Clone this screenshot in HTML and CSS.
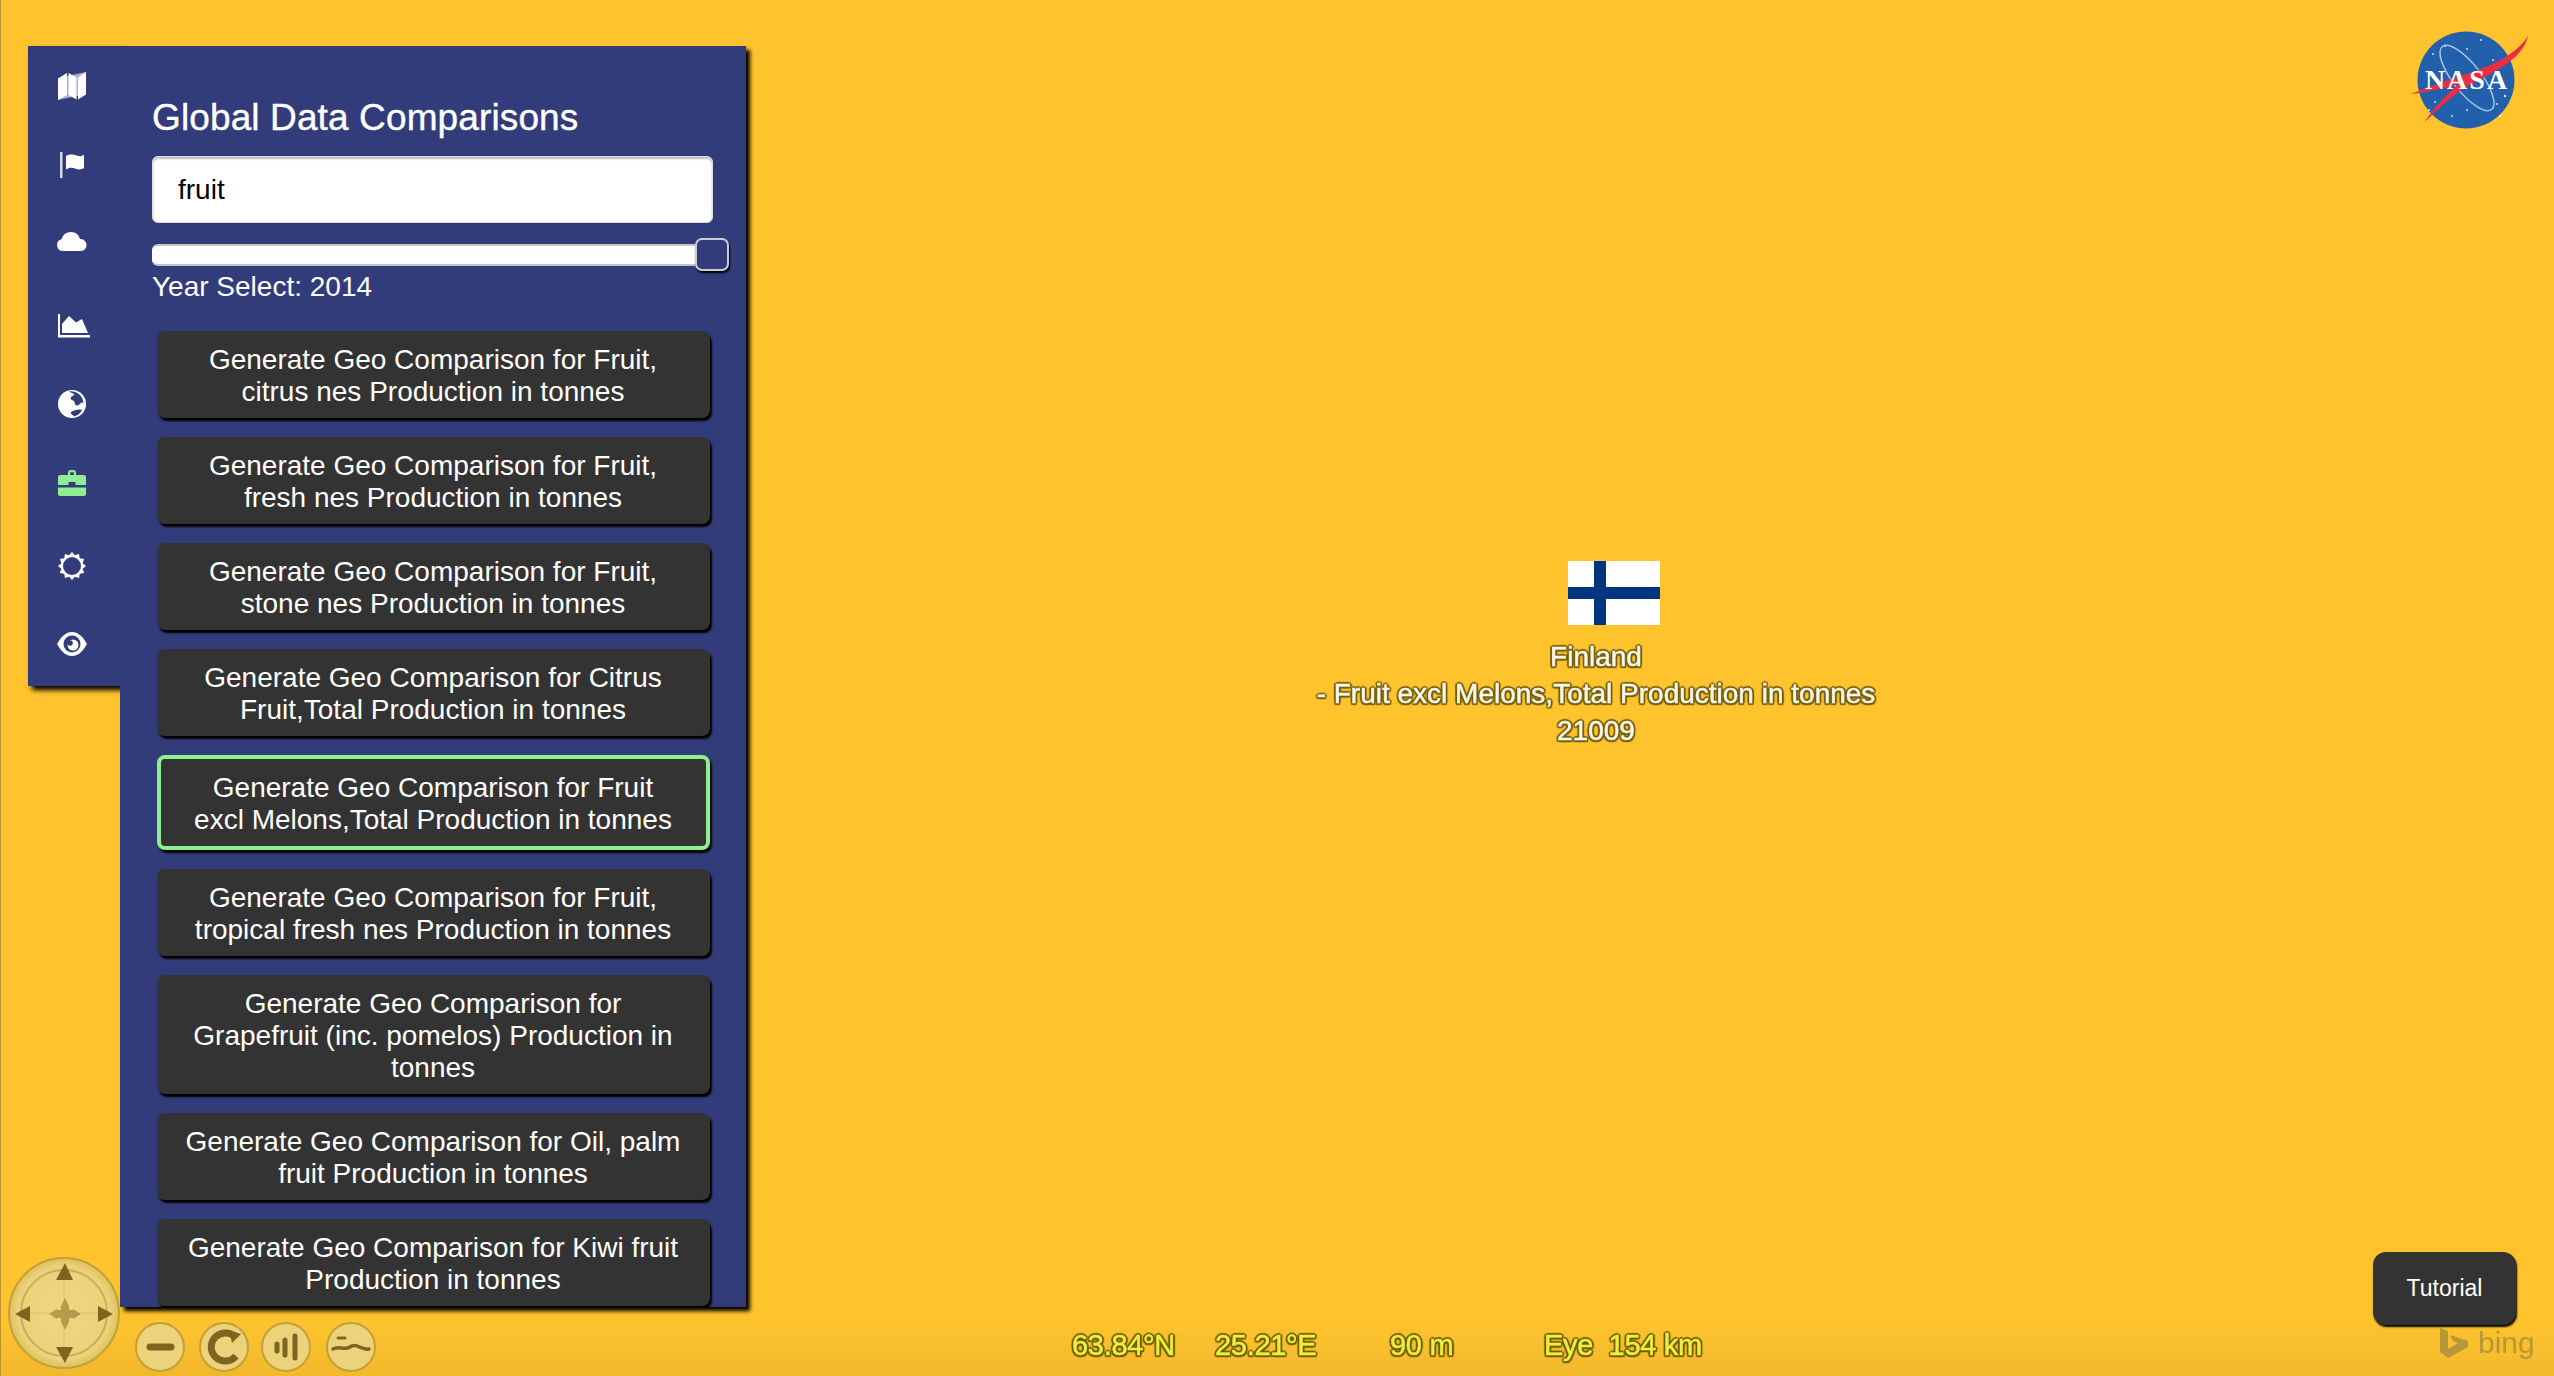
FILE: index.html
```html
<!DOCTYPE html>
<html lang="en">
<head>
<meta charset="utf-8">
<title>Global Data Comparisons</title>
<link rel="stylesheet" href="styles.css">
</head>
<body>
<div class="app">
  <nav class="strip">
    <svg class="slot" viewBox="0 0 92 80"><polygon class="ghost" points="30,32 58,26 58,48 30,54"/><path class="ico" d="M30 32.500 39 27V49L30 54ZM40.500 27 48.500 31.500V53.500L40.500 49ZM50 31.500 58 26V48.500L50 53.500Z"/></svg>
    <svg class="slot" viewBox="0 0 92 80"><rect class="ghost2" x="32" y="26" width="2.500" height="26"/><path class="ico" d="M38 30c4-2.500 8-1.500 11-.5s5 1 7-1V42c-3 2-6 1.500-9 .5s-6-1-9 1Z"/></svg>
    <svg class="slot" viewBox="0 0 92 80"><path class="ico" d="M35 45a6 6 0 0 1-1.500-11.800A10 10 0 0 1 43 26a9.500 9.500 0 0 1 9 7 6 6 0 0 1 1 12Z"/></svg>
    <svg class="slot" viewBox="0 0 92 80"><path class="ico" d="M30 28h2V49H62v2.500H30ZM34 47V38L41 30 48 36.500 54 33 60 47Z"/></svg>
    <svg class="slot" viewBox="0 0 92 80"><circle class="ico" cx="44" cy="38" r="14"/><path class="cut" d="M41 25.500c1 1.500 4 1 5 2.500s-2 2-3 3 0 3 2 3.500 1 3 3 4.500 3-.5 5-2 2.500 1 2.500 1a12.500 12.500 0 0 0-14.500-12.500Z"/><path class="cut" d="M43 46c3-2 8-3 11-2a12.500 12.500 0 0 1-8 6.500c-1-2-4-2.500-3-4.500Z"/></svg>
    <svg class="slot" viewBox="0 0 92 80"><path class="ok-ico" d="M40 29v-2.500a2.500 2.500 0 0 1 2.500-2.500h3a2.500 2.500 0 0 1 2.500 2.500V29h-2.200v-2.800h-3.600V29ZM32 29H56a2 2 0 0 1 2 2v8H47.500V36h-7v3H30V31a2 2 0 0 1 2-2ZM30 41.500H58V48a2 2 0 0 1-2 2H32a2 2 0 0 1-2-2Z"/></svg>
    <svg class="slot" viewBox="0 0 92 80"><polygon class="ico" points="58,40 54.630,42.850 56.120,47 51.780,47.780 51,52.120 46.850,50.630 44,54 41.150,50.630 37,52.120 36.220,47.780 31.880,47 33.370,42.850 30,40 33.370,37.150 31.880,33 36.220,32.220 37,27.880 41.150,29.370 44,26 46.850,29.370 51,27.880 51.780,32.220 56.120,33 54.630,37.150"/><circle class="cut" cx="44" cy="40" r="9"/></svg>
    <svg class="slot" viewBox="0 0 92 80"><path class="ico" d="M29 38C34 29 39 26 44 26S54 29 59 38C54 47 49 50 44 50S34 47 29 38Z"/><circle class="cut" cx="44" cy="38" r="8.500"/><circle class="ico" cx="45" cy="39" r="5.500"/><circle class="cut" cx="42" cy="37" r="2.800"/></svg>
  </nav>
  <main class="panel">
    <h1 class="title">Global Data Comparisons</h1>
    <div class="search">fruit</div>
    <div class="slider"><div class="track"></div><div class="thumb"></div></div>
    <p class="year">Year Select: 2014</p>
    <button class="geo">Generate Geo Comparison for Fruit, citrus nes Production in tonnes</button>
    <button class="geo">Generate Geo Comparison for Fruit, fresh nes Production in tonnes</button>
    <button class="geo">Generate Geo Comparison for Fruit, stone nes Production in tonnes</button>
    <button class="geo">Generate Geo Comparison for Citrus Fruit,Total Production in tonnes</button>
    <button class="geo selected">Generate Geo Comparison for Fruit excl Melons,Total Production in tonnes</button>
    <button class="geo">Generate Geo Comparison for Fruit, tropical fresh nes Production in tonnes</button>
    <button class="geo">Generate Geo Comparison for Grapefruit (inc. pomelos) Production in tonnes</button>
    <button class="geo">Generate Geo Comparison for Oil, palm fruit Production in tonnes</button>
    <button class="geo">Generate Geo Comparison for Kiwi fruit Production in tonnes</button>
  </main>
</div>

<svg class="nasa" viewBox="0 0 120 120">
  <circle cx="61" cy="60" r="48.500" fill="#2260ab"/>
  <g fill="#fff" opacity=".8"><circle cx="40" cy="26" r="1"/><circle cx="62" cy="29" r="1"/><circle cx="76" cy="20" r="1"/><circle cx="88" cy="40" r="1"/><circle cx="28" cy="34" r="1"/><circle cx="95" cy="96" r="1"/><circle cx="100" cy="76" r="1.200"/><circle cx="30" cy="82" r="1"/><circle cx="47" cy="96" r="1"/><circle cx="62" cy="90" r="1"/><circle cx="24" cy="90" r="1"/><circle cx="92" cy="84" r="1"/></g>
  <ellipse cx="62" cy="58" rx="14" ry="40" transform="rotate(-38 62 58)" fill="none" stroke="#a9c6e4" stroke-width="1.500"/>
  <path d="M6 74C30 64 50 58 62 54 85 46 110 36 123 16 118 36 98 48 70 62 50 72 34 88 19 103 30 86 42 74 54 64 40 68 22 72 6 74Z" fill="#e92d44"/>
  <text class="nasa-word" x="62" y="69">NASA</text>
</svg>

<div class="placemark">
  <svg class="flag" viewBox="0 0 92 64"><rect width="92" height="64" fill="#fff"/><rect x="26" width="12" height="64" fill="#003580"/><rect y="26" width="92" height="12" fill="#003580"/></svg>
  <div class="label">Finland<br>- Fruit excl Melons,Total Production in tonnes<br>21009</div>
</div>

<svg class="controls" viewBox="0 1246 400 130">
  <defs>
    <radialGradient id="dial"><stop offset="0" stop-color="#efd57c"/><stop offset=".85" stop-color="#ecd27a"/><stop offset="1" stop-color="#dcbf5e"/></radialGradient>
  </defs>
  <circle cx="64" cy="1313" r="55" fill="url(#dial)" stroke="#c4a036" stroke-width="2"/>
  <circle cx="64" cy="1313" r="43" fill="none" stroke="#c8ae5c" stroke-width="2"/>
  <path d="M64 1270V1356M21 1313H107" stroke="#dcc26c" stroke-width="1"/>
  <path d="M49 1314 57 1309V1310H61V1306L65 1298 69 1306V1310H73V1309L81 1314 73 1319V1318H69V1322L65 1330 61 1322V1318H57V1319Z" fill="#b49c4c"/>
  <path d="M65 1263 73 1280H56ZM65 1363 73 1347H56ZM15 1314 30 1306V1322ZM113 1314 98 1306V1322Z" fill="#7d6420"/>
  <g fill="#ecd27a" stroke="#c4a036" stroke-width="2">
    <circle cx="160" cy="1347" r="24"/><circle cx="224" cy="1347" r="24"/><circle cx="286" cy="1347" r="24"/><circle cx="351" cy="1347" r="24"/>
  </g>
  <g fill="none" stroke="#7d6420" stroke-linecap="round">
    <path d="M150 1347H171" stroke-width="7"/>
    <path d="M236 1338A14 14 0 1 0 236 1356" stroke-width="7" stroke-linecap="butt"/>
    <path d="M277 1344V1351M285 1340V1355M295 1336V1358" stroke-width="5"/>
    <path d="M333 1349c5-3 9 0 14-1s5-4 10-2 9 4 12 3" stroke-width="3.500"/>
    <path d="M338 1338H345" stroke-width="3"/>
  </g>
  <path d="M229 1330 241 1334 232 1343Z" fill="#7d6420"/>
</svg>

<div class="readout">
  <span class="r-lat">63.84°N</span>
  <span class="r-lon">25.21°E</span>
  <span class="r-alt">90 m</span>
  <span class="r-eye">Eye&nbsp; 154 km</span>
</div>

<div class="bing">
  <svg class="bing-mark" viewBox="0 0 28 30"><path d="M0 0 8 3V21L18 15 13 13 10 7 28 13V19L8 30 0 24Z"/></svg>
  <span>bing</span>
</div>

<button class="tutorial">Tutorial</button>
</body>
</html>
```
FILE: styles.css
```css
* { box-sizing: border-box; }
html, body { margin: 0; height: 100%; }
body {
  position: relative;
  height: 1376px;
  overflow: hidden;
  font-family: "Liberation Sans", Arial, sans-serif;
  background: linear-gradient(#fec32d 0, #fec32d 96%, #f2b92e 100%);
  border-left: 1px solid #b8942a;
}
.app {
  display: flex;
  align-items: flex-start;
  padding: 46px 0 0 27px;
}
.strip {
  display: flex;
  flex-direction: column;
  width: 92px;
  background: #333c7a;
  box-shadow: 4px 4px 5px #000;
}
.slot { display: block; width: 92px; height: 80px; }
.ico { fill: #fff; }
.cut { fill: #333c7a; }
.ok-ico { fill: #90ee90; }
.ghost { fill: #aab0d0; }
.ghost2 { fill: #d6d8e8; }

.panel {
  width: 626px;
  height: 1261px;
  padding: 51px 0 0 32px;
  overflow: hidden;
  background: #333c7a;
  box-shadow: 4px 4px 4px #000;
  color: #fff;
}
.title {
  margin: 0 0 17px;
  font-size: 37px;
  font-weight: 400;
  line-height: 42px;
  letter-spacing: .12px;
  -webkit-text-stroke: .4px #fff;
}
.search {
  width: 561px;
  height: 67px;
  padding-left: 25px;
  border-radius: 6px;
  background: #fff;
  border: 1px solid #ddd;
  box-shadow: inset 0 2px 2px #bbb;
  color: #000;
  font-size: 28px;
  line-height: 66px;
}
.slider {
  display: flex;
  align-items: center;
  width: 577px;
  height: 33px;
  margin-top: 15px;
}
.track {
  flex: 1;
  height: 22px;
  border-radius: 6px 0 0 6px;
  background: #fff;
  border-top: 2px solid #c4c4c4;
  border-bottom: 2px solid #c4c4c4;
}
.thumb {
  width: 34px;
  height: 33px;
  border: 2px solid #c9cbd6;
  border-radius: 7px;
  background: #333c7a;
  box-shadow: 1px 2px 2px #000;
}
.year {
  margin: 2px 0 30px;
  font-size: 28px;
  line-height: 28px;
}
.geo {
  display: block;
  width: 553px;
  margin: 0 0 19px 5px;
  padding: 12.5px 25px 10.5px 24px;
  border: 0;
  border-radius: 8px;
  background: #333;
  box-shadow: 2px 3px 2px #000;
  color: #fff;
  font-family: inherit;
  font-size: 28px;
  line-height: 32px;
  text-align: center;
}
.geo.selected { border: 4px solid #90ee90; }

.nasa {
  position: absolute;
  top: 20px;
  left: 2404px;
  width: 120px;
  height: 120px;
  overflow: visible;
}
.nasa-word {
  fill: #fff;
  font-family: "Liberation Serif", serif;
  font-size: 28px;
  font-weight: 700;
  letter-spacing: 2px;
  text-anchor: middle;
}
.placemark {
  position: absolute;
  top: 561px;
  left: 1294px;
  width: 602px;
  display: flex;
  flex-direction: column;
  align-items: center;
}
.flag { display: block; width: 92px; height: 64px; margin-left: 36px; }
.label {
  margin-top: 13px;
  color: #faf6e8;
  font-size: 28px;
  line-height: 37px;
  text-align: center;
  filter: blur(.7px);
  -webkit-text-stroke: .5px #faf6e8;
  text-shadow: 2px 0 1px #75600c, -2px 0 1px #75600c, 0 2px 1px #75600c, 0 -2px 1px #75600c, 1.500px 1.500px 1px #75600c, -1.500px 1.500px 1px #75600c, 1.500px -1.500px 1px #75600c, -1.500px -1.500px 1px #75600c;
}
.controls {
  position: absolute;
  left: -1px;
  top: 1246px;
  width: 400px;
  height: 130px;
  filter: blur(.5px);
}
.readout {
  position: absolute;
  left: 0;
  top: 1328px;
  display: flex;
  color: #eeee3c;
  font-size: 29px;
  line-height: 34px;
  letter-spacing: -.3px;
  white-space: nowrap;
  filter: blur(.7px);
  -webkit-text-stroke: .5px #eeee3c;
  text-shadow: 2px 0 1px #6e5f08, -2px 0 1px #6e5f08, 0 2px 1px #6e5f08, 0 -2px 1px #6e5f08, 1.500px 1.500px 1px #6e5f08, -1.500px 1.500px 1px #6e5f08, 1.500px -1.500px 1px #6e5f08, -1.500px -1.500px 1px #6e5f08;
}
.r-lat { margin-left: 1071px; width: 143px; }
.r-lon { width: 175px; }
.r-alt { width: 154px; }
.bing {
  position: absolute;
  top: 1326px;
  left: 2439px;
  display: flex;
  align-items: center;
  gap: 10px;
  color: #b6973a;
  font-size: 30px;
  line-height: 34px;
  filter: blur(.5px);
}
.bing-mark { width: 28px; height: 30px; fill: #b6973a; }
.tutorial {
  position: absolute;
  top: 1252px;
  left: 2372px;
  width: 143px;
  height: 73px;
  border: 0;
  border-radius: 13px;
  background: #333;
  box-shadow: 1px 2px 2px #000;
  color: #fff;
  font-family: inherit;
  font-size: 23px;
}
```
